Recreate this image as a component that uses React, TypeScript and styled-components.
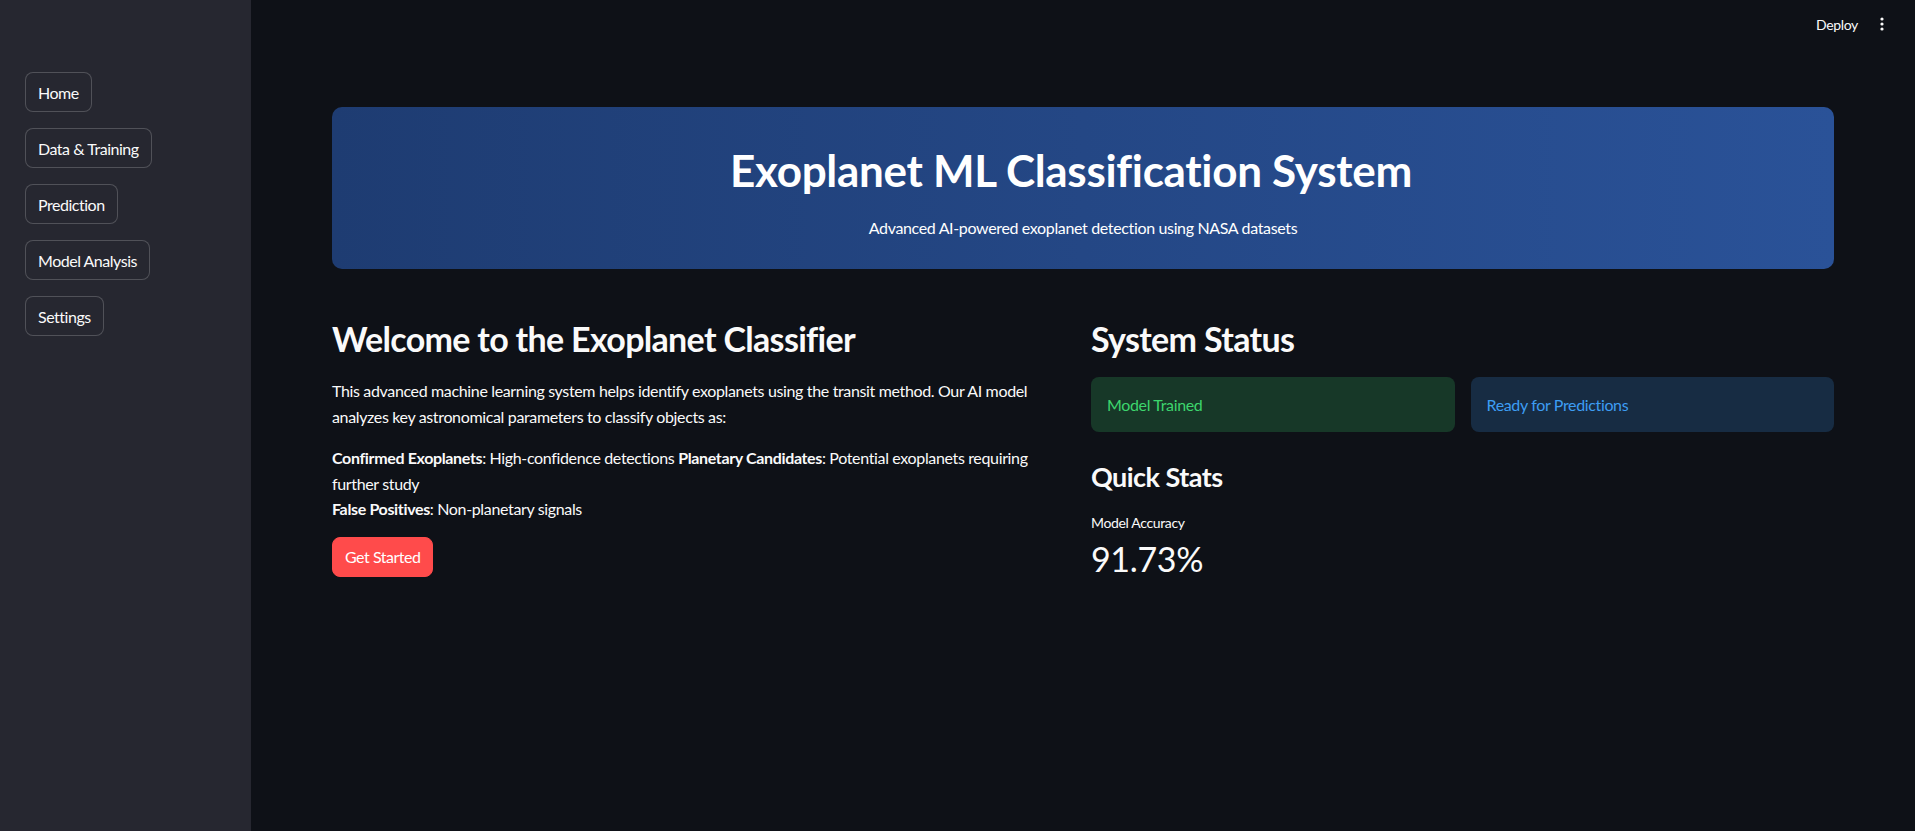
import React from "react";
import styled, {createGlobalStyle} from "styled-components";

const GlobalStyle = createGlobalStyle`
  html, body {
    margin: 0;
    padding: 0;
    background: #0e1117;
    color: #fafafa;
    font-family: "Source Sans Pro", Lato, "Noto Sans", sans-serif;
    letter-spacing: -0.022em;
  }
  * {
    box-sizing: border-box;
  }
`;

const pages = ["Home", "Data & Training", "Prediction", "Model Analysis", "Settings"];

export default function App() {
  return (
    <>
      <GlobalStyle />
      <Shell>
        <Sidebar>
          {pages.map((page) => (
            <NavButton key={page}>{page}</NavButton>
          ))}
        </Sidebar>
        <Main>
          <Header>
            <DeployButton>Deploy</DeployButton>
            <MenuButton aria-label="menu">
              <svg width="16" height="16" viewBox="0 0 16 16">
                <circle cx="8" cy="3" r="1.6" fill="#fafafa" />
                <circle cx="8" cy="8" r="1.6" fill="#fafafa" />
                <circle cx="8" cy="13" r="1.6" fill="#fafafa" />
              </svg>
            </MenuButton>
          </Header>
          <Content>
            <Banner>
              <BannerTitle>Exoplanet ML Classification System</BannerTitle>
              <BannerSub>Advanced AI-powered exoplanet detection using NASA datasets</BannerSub>
            </Banner>
            <Columns>
              <Column>
                <H2>Welcome to the Exoplanet Classifier</H2>
                <Para>
                  This advanced machine learning system helps identify exoplanets using the transit method. Our AI model
                  analyzes key astronomical parameters to classify objects as:
                </Para>
                <Para>
                  <b>Confirmed Exoplanets</b>: High-confidence detections <b>Planetary Candidates</b>: Potential
                  exoplanets requiring further study
                  <br />
                  <b>False Positives</b>: Non-planetary signals
                </Para>
                <PrimaryButton>Get Started</PrimaryButton>
              </Column>
              <Column>
                <H2>System Status</H2>
                <StatusRow>
                  <StatusBox $kind="success">Model Trained</StatusBox>
                  <StatusBox $kind="info">Ready for Predictions</StatusBox>
                </StatusRow>
                <H3>Quick Stats</H3>
                <MetricLabel>Model Accuracy</MetricLabel>
                <MetricValue>91.73%</MetricValue>
              </Column>
            </Columns>
          </Content>
        </Main>
      </Shell>
    </>
  );
}

const Shell = styled.div`
  display: flex;
  min-height: 100vh;
  width: 100%;
`;

const Sidebar = styled.aside`
  width: 251px;
  flex-shrink: 0;
  background: #262730;
  display: flex;
  flex-direction: column;
  align-items: flex-start;
  gap: 16px;
  padding: 72px 25px 0 25px;
`;

const NavButton = styled.button`
  font-family: inherit;
  letter-spacing: -0.03em;
  font-size: 16px;
  color: #fafafa;
  background: #262730;
  border: 1px solid rgba(250, 250, 250, 0.2);
  border-radius: 8px;
  height: 40px;
  padding: 0 12px;
  cursor: pointer;
`;

const Main = styled.main`
  flex: 1;
  display: flex;
  flex-direction: column;
`;

const Header = styled.header`
  height: 48px;
  display: flex;
  align-items: center;
  justify-content: flex-end;
  gap: 16px;
  padding: 0 25px 0 0;
`;

const DeployButton = styled.button`
  font-family: inherit;
  letter-spacing: inherit;
  font-size: 14px;
  color: #fafafa;
  background: transparent;
  border: none;
  padding: 0;
`;

const MenuButton = styled.button`
  display: flex;
  background: transparent;
  border: none;
  padding: 0;
`;

const Content = styled.div`
  padding: 59px 81px 0 81px;
`;

const Banner = styled.div`
  height: 162px;
  border-radius: 10px;
  background: linear-gradient(90deg, #1e3c72 0%, #2a5298 100%);
  display: flex;
  flex-direction: column;
  align-items: center;
  padding-top: 39px;
`;

const BannerTitle = styled.h1`
  margin: 0;
  padding-right: 24px;
  font-size: 44px;
  line-height: 48px;
  font-weight: 700;
  letter-spacing: -0.3px;
  color: #ffffff;
`;

const BannerSub = styled.p`
  margin: 22px 0 0 0;
  font-size: 16px;
  line-height: 24px;
  color: #ffffff;
`;

const Columns = styled.div`
  display: grid;
  grid-template-columns: 1fr 1fr;
  gap: 16px;
  margin-top: 48px;
`;

const Column = styled.div`
  display: flex;
  flex-direction: column;
  align-items: flex-start;
`;

const H2 = styled.h2`
  margin: 0;
  font-size: 34px;
  line-height: 43px;
  font-weight: 700;
  letter-spacing: -0.02em;
`;

const H3 = styled.h3`
  margin: 28px 0 0 0;
  font-size: 27px;
  line-height: 34px;
  font-weight: 700;
  letter-spacing: -0.02em;
`;

const Para = styled.p`
  margin: 18px 0 0 0;
  font-size: 16px;
  line-height: 25.6px;
  & + & {
    margin-top: 16px;
  }
  b {
    font-weight: 700;
  }
`;

const PrimaryButton = styled.button`
  margin-top: 15px;
  font-family: inherit;
  letter-spacing: -0.03em;
  font-size: 16px;
  color: #ffffff;
  background: #ff4b4b;
  border: 1px solid #ff4b4b;
  border-radius: 8px;
  height: 40px;
  padding: 0 12px;
`;

const StatusRow = styled.div`
  width: 100%;
  display: grid;
  grid-template-columns: 1fr 1fr;
  gap: 16px;
  margin-top: 17px;
`;

const StatusBox = styled.div<{$kind: "success" | "info"}>`
  height: 55px;
  border-radius: 8px;
  display: flex;
  align-items: center;
  padding: 0 16px;
  font-size: 16px;
  background: ${(p) => (p.$kind === "success" ? "rgba(61, 213, 109, 0.2)" : "rgba(61, 157, 243, 0.2)")};
  color: ${(p) => (p.$kind === "success" ? "#3dd56d" : "#3d9df3")};
`;

const MetricLabel = styled.div`
  margin-top: 19px;
  font-size: 14px;
  line-height: 20px;
`;

const MetricValue = styled.div`
  margin-top: 4px;
  font-size: 34px;
  line-height: 43px;
  font-weight: 400;
`;
